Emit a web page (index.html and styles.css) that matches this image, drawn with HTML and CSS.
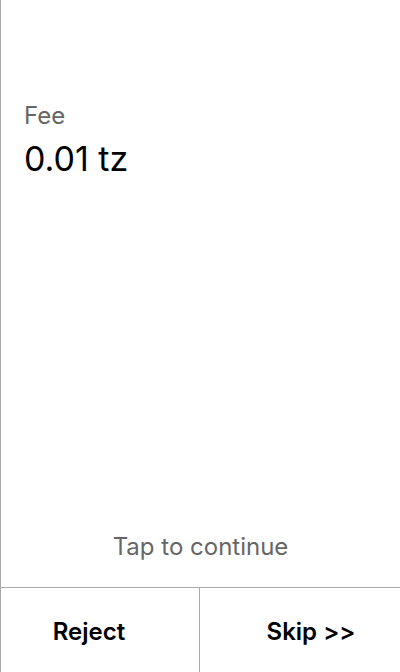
FILE: index.html
```html
<!DOCTYPE html>
<html>
<head>
<meta charset="utf-8">
<link rel="stylesheet" href="styles.css">
</head>
<body>
<div class="screen">
  <div class="content">
    <div class="label">Fee</div>
    <div class="value">0.01 tz</div>
  </div>
  <div class="hint">Tap to continue</div>
  <div class="actions">
    <div class="btn btn-left">Reject</div>
    <div class="btn btn-right">Skip &gt;&gt;</div>
  </div>
</div>
</body>
</html>
```
FILE: styles.css
```css
html, body {
  margin: 0;
  padding: 0;
  background: #fff;
}
.screen {
  box-sizing: border-box;
  width: 400px;
  height: 672px;
  border-left: 1px solid #aaa;
  display: flex;
  flex-direction: column;
  font-family: Inter, "Noto Sans", sans-serif;
  color: #000;
}
.content {
  flex: 1;
  padding: 101px 0 0 23px;
}
.label {
  font-size: 24px;
  color: #666;
  line-height: 29px;
}
.value {
  font-size: 34px;
  line-height: 41px;
  margin-top: 8px;
}
.hint {
  text-align: center;
  font-size: 24px;
  line-height: 29px;
  color: #666;
  padding-bottom: 26px;
}
.actions {
  display: flex;
  height: 84px;
  border-top: 1px solid #aaa;
}
.btn {
  box-sizing: border-box;
  display: flex;
  align-items: center;
  justify-content: center;
  padding-top: 2px;
  font-size: 24px;
  font-weight: 600;
}
.btn-left {
  width: 199px;
  padding-right: 22px;
  border-right: 1px solid #aaa;
}
.btn-right {
  flex: 1;
  padding-left: 22px;
}
```
